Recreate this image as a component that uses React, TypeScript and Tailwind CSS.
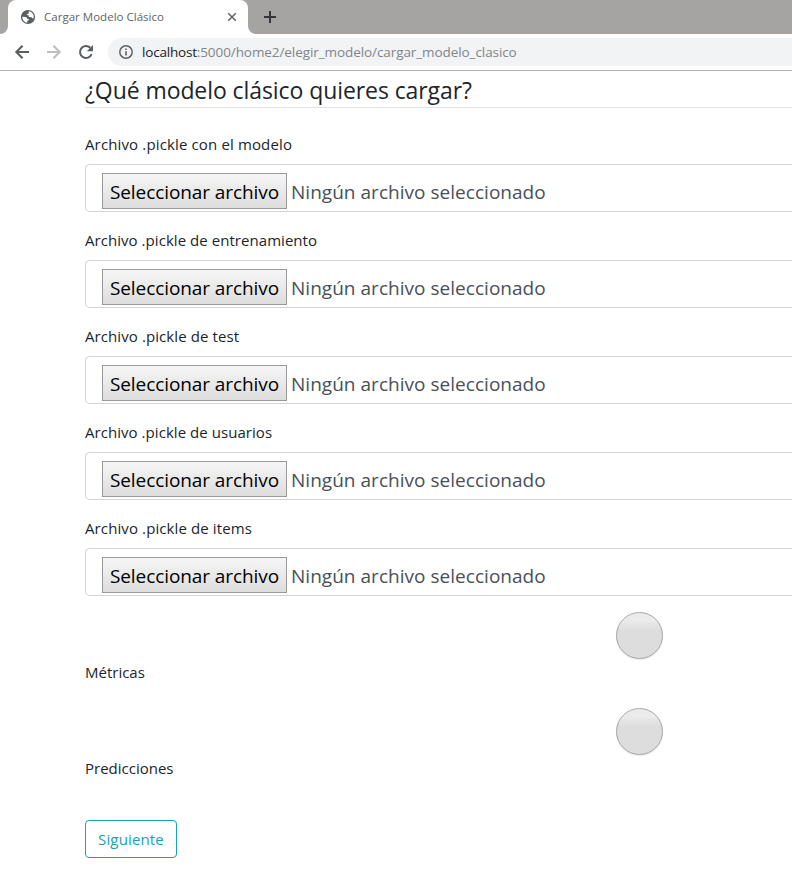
const fileFields = [
  { label: "Archivo .pickle con el modelo", spacing: "tracking-[0.14px]" },
  { label: "Archivo .pickle de entrenamiento", spacing: "tracking-[0.05px]" },
  { label: "Archivo .pickle de test", spacing: "tracking-[0.09px]" },
  { label: "Archivo .pickle de usuarios", spacing: "tracking-[0.05px]" },
  { label: "Archivo .pickle de items", spacing: "tracking-[0.11px]" },
];

function Globe() {
  return (
    <svg className="ml-3 size-4 shrink-0" viewBox="0 0 16 16">
      <circle cx="8" cy="8" r="7.1" fill="#5a5e63" />
      <path
        d="M8.6 2.3 C10.6 2.5 12.6 3.7 13.4 5.8 C13.9 7.2 13.8 8.4 13.4 9.4 L12.2 9.2 L11.2 8 L9.2 8 L8.4 7 L8.4 6.1 L6.9 5.9 L6.9 5 L8.4 4.7 L8.9 3.6 Z"
        fill="#fff"
      />
      <path
        d="M2.2 7.7 L5.4 8 C6.6 8.2 7 8.8 7 9.8 L8.7 10 L8.7 11.2 L7.4 11.7 L7.1 13.7 C4.6 13.4 2.3 11 2.2 7.7 Z"
        fill="#fff"
      />
    </svg>
  );
}

function BrowserChrome() {
  return (
    <header className="bg-white">
      <div className="flex h-[34px] bg-[#a5a4a2]">
        <svg className="h-[34px] w-2 shrink-0" viewBox="0 0 8 34">
          <path d="M8 26 V34 H0 A8 8 0 0 0 8 26Z" fill="#fff" />
        </svg>
        <div className="flex h-[34px] w-[240px] items-center rounded-t-lg bg-white">
          <Globe />
          <span className="ml-2 w-[176px] text-[11.5px] leading-4 tracking-[0.02px] text-[#5f6368]">
            Cargar Modelo Clásico
          </span>
          <svg className="ml-[7px] size-[10px] shrink-0" viewBox="0 0 10 10" stroke="#5f6368" strokeWidth="1.5">
            <path d="M1.2 1.2 L8.8 8.8 M8.8 1.2 L1.2 8.8" />
          </svg>
        </div>
        <svg className="h-[34px] w-2 shrink-0" viewBox="0 0 8 34">
          <path d="M0 26 V34 H8 A8 8 0 0 1 0 26Z" fill="#fff" />
        </svg>
        <svg className="mt-[11px] ml-2 size-3 shrink-0" viewBox="0 0 12 12" stroke="#35363a" strokeWidth="2">
          <path d="M6 0 V12 M0 6 H12" />
        </svg>
      </div>
      <div className="flex h-9 items-center pl-[14px]">
        <svg className="size-4 shrink-0" viewBox="0 0 16 16" fill="none" stroke="#5a5e63" strokeWidth="2">
          <path d="M15 8 H2.5 M8.6 1.7 L2.3 8 L8.6 14.3" />
        </svg>
        <svg className="ml-4 size-4 shrink-0" viewBox="0 0 16 16" fill="none" stroke="#bdbebf" strokeWidth="2">
          <path d="M1 8 H13.5 M7.4 1.7 L13.7 8 L7.4 14.3" />
        </svg>
        <svg className="ml-4 size-4 shrink-0" viewBox="0 0 16 16">
          <path d="M13.6 10.2 A6 6 0 1 1 12.3 3.8" fill="none" stroke="#5a5e63" strokeWidth="2" />
          <path d="M15 1 V7.2 H8.8 Z" fill="#5a5e63" />
        </svg>
        <div className="ml-[14px] flex h-7 flex-1 items-center rounded-l-full bg-[#f1f3f4] pl-[11px]">
          <svg className="size-[14px] shrink-0" viewBox="0 0 14 14">
            <circle cx="7" cy="7" r="6.2" fill="none" stroke="#5f6368" strokeWidth="1.5" />
            <path d="M7 6.2 V10.4 M7 3.4 V5" stroke="#5f6368" strokeWidth="1.6" />
          </svg>
          <div className="ml-[9px] text-[13.5px] leading-5 whitespace-nowrap text-[#80868b]">
            <span className="tracking-[-0.2px] text-[#202124]">localhost</span>
            <span className="tracking-[-0.08px]">:5000/home2/elegir_modelo/cargar_modelo_clasico</span>
          </div>
        </div>
      </div>
      <div className="h-px bg-[#b3b3b3]" />
    </header>
  );
}

function FileField({ label, spacing }: { label: string; spacing: string }) {
  return (
    <div className="mb-4">
      <label className={`mb-2 block h-6 pt-px text-[15px] leading-[23px] ${spacing}`}>{label}</label>
      <div className="flex h-12 rounded-l-[4.8px] border border-r-0 border-[#ced4da] pt-2 pl-4">
        <button className="h-9 w-[185px] border border-[#999] bg-linear-to-b from-[#f6f6f6] to-[#dddddd] pt-[3px] text-[19px] leading-[31px] tracking-[-0.08px] whitespace-nowrap text-black">
          Seleccionar archivo
        </button>
        <span className="ml-1 pt-px text-[19px] leading-9 tracking-[0.03px] whitespace-nowrap text-[#495057]">
          Ningún archivo seleccionado
        </span>
      </div>
    </div>
  );
}

function RadioField({ label }: { label: string }) {
  return (
    <div className="mb-4 h-20">
      <div className="ml-[531px] size-[47px] rounded-full border border-[#a6a6a6] bg-linear-to-b from-[#ebebeb] from-15% to-[#dddddd] to-40% shadow-[0_1px_1px_rgba(0,0,0,0.1)]" />
      <div className="mt-px text-[15px] leading-6">{label}</div>
    </div>
  );
}

export default function App() {
  return (
    <div className="h-[885px] overflow-hidden bg-white font-['Open_Sans',sans-serif] text-[#212529]">
      <BrowserChrome />
      <main className="pl-[85px]">
        <h1 className="h-[37px] border-b border-[#dee2e6] pt-[3px] text-[23px] leading-8 tracking-[-0.08px] whitespace-nowrap">
          ¿Qué modelo clásico quieres cargar?
        </h1>
        <form className="pt-6">
          {fileFields.map((f) => (
            <FileField key={f.label} label={f.label} spacing={f.spacing} />
          ))}
          <RadioField label="Métricas" />
          <RadioField label="Predicciones" />
          <button className="mt-4 h-[38px] w-[92px] rounded border border-[#17a2b8] text-[15px] leading-9 tracking-[0.15px] text-[#17a2b8]">
            Siguiente
          </button>
        </form>
      </main>
    </div>
  );
}
